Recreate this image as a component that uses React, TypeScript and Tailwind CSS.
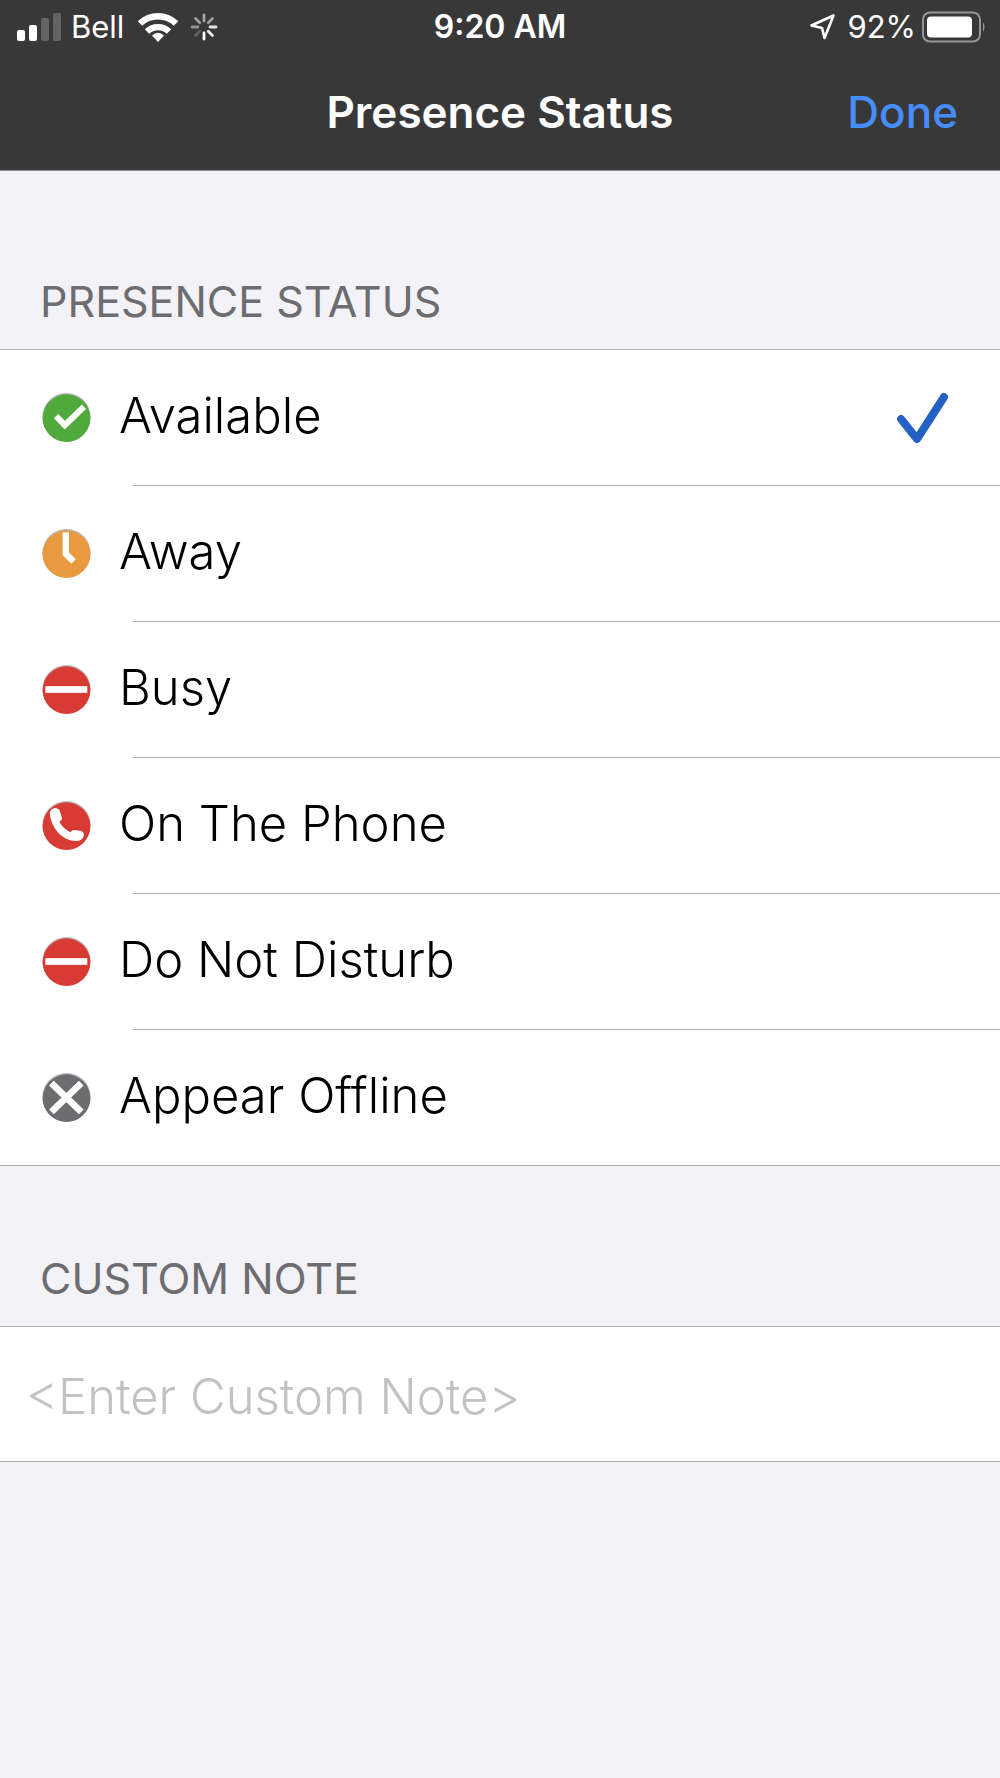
import { useState } from "react";

type Status = {
  id: string;
  label: string;
  color: string;
  glyph: React.ReactNode;
};

const dash = <rect x="10" y="63" width="125" height="20" fill="#fff" />;

const statuses: Status[] = [
  {
    id: "available",
    label: "Available",
    color: "#50a93b",
    glyph: (
      <path d="M42 69 L68 96 L125 41" fill="none" stroke="#fff" strokeWidth="18" />
    ),
  },
  {
    id: "away",
    label: "Away",
    color: "#e9993e",
    glyph: (
      <path d="M71 10 V74 L94 97" fill="none" stroke="#fff" strokeWidth="19" />
    ),
  },
  { id: "busy", label: "Busy", color: "#d83a34", glyph: dash },
  {
    id: "phone",
    label: "On The Phone",
    color: "#d83a34",
    glyph: (
      <path
        d="M23 36 Q25 22 40 21 Q52 23 54 32 L59 50 Q61 58 52 61 Q57 77 84 93 Q91 84 101 87 L115 89 Q126 92 125 103 Q121 118 105 119 Q77 122 50 97 Q26 71 23 36 Z"
        fill="#fff"
      />
    ),
  },
  { id: "dnd", label: "Do Not Disturb", color: "#d83a34", glyph: dash },
  {
    id: "offline",
    label: "Appear Offline",
    color: "#6d6c70",
    glyph: (
      <path d="M28 30 L117 116 M117 30 L28 116" stroke="#fff" strokeWidth="20" />
    ),
  },
];

const spokes = [0.55, 0.5, 0.85, 0.9, 1, 0.2, 0.45, 0.5];

const StatusIcon = ({ status }: { status: Status }) => (
  <svg viewBox="0 0 146 146" className="size-[49px] shrink-0" aria-hidden="true">
    <circle cx="73" cy="72" r="72" fill="#b9b9bb" />
    <circle cx="73" cy="75" r="71" fill={status.color} />
    {status.glyph}
  </svg>
);

const StatusBar = () => (
  <div className="grid h-[54px] grid-cols-[1fr_auto_1fr] items-center text-[31px] leading-9">
    <div className="flex items-center pl-[17px]">
      <svg viewBox="0 0 44 28" className="h-7 w-11" aria-hidden="true">
        <rect x="0" y="17" width="8" height="11" rx="2" fill="#fff" />
        <rect x="12" y="12" width="8" height="16" rx="2" fill="#fff" />
        <rect x="24" y="5" width="8" height="23" rx="2" fill="#636363" />
        <rect x="36" y="0" width="8" height="28" rx="2" fill="#636363" />
      </svg>
      <span className="ml-2.5">Bell</span>
      <svg viewBox="0 0 40 29" className="ml-3.5 h-[29px] w-10" aria-hidden="true">
        <g fill="none" stroke="#fff" strokeWidth="6.4">
          <path d="M2 10.5 A26 26 0 0 1 38 10.5" />
          <path d="M9 18.5 A16 16 0 0 1 31 18.5" />
        </g>
        <path d="M14 22.5 Q20 17 26 22.5 L20 29 Z" fill="#fff" />
      </svg>
      <svg viewBox="-14 -14 28 28" className="ml-3 size-7" aria-hidden="true">
        {spokes.map((opacity, i) => (
          <path
            key={i}
            d="M0 -6 V-12"
            transform={`rotate(${i * 45})`}
            stroke="#fff"
            strokeWidth="2.8"
            strokeLinecap="round"
            opacity={opacity}
          />
        ))}
      </svg>
    </div>
    <span className="text-[32px] font-semibold">9:20 AM</span>
    <div className="flex items-center justify-end pr-3.5">
      <svg viewBox="0 0 28 28" className="size-7" aria-hidden="true">
        <path
          d="M2.5 12.5 L24.5 2.5 L15.5 25 L13 15 Z"
          fill="none"
          stroke="#fff"
          strokeWidth="2.6"
          strokeLinejoin="round"
        />
      </svg>
      <span className="ml-2.5">92%</span>
      <svg viewBox="0 0 64 32" className="ml-1.5 h-8 w-16" aria-hidden="true">
        <rect x="1" y="1.5" width="57" height="29" rx="7" fill="none" stroke="#959595" strokeWidth="2" />
        <rect x="5" y="5.5" width="45" height="21" rx="4" fill="#fff" />
        <path d="M61 11 Q64 16 61 21 Z" fill="#959595" />
      </svg>
    </div>
  </div>
);

const SectionTitle = ({ children }: { children: React.ReactNode }) => (
  <h2 className="px-10 pb-[26px] text-[43px] leading-[44px] text-[#6d6c71] uppercase">
    {children}
  </h2>
);

const App = () => {
  const [selected, setSelected] = useState("available");
  const [note, setNote] = useState("");

  return (
    <div className="min-h-screen bg-[#f2f2f7] font-['Inter',sans-serif] text-black">
      <header className="border-b border-[#8b8b8c] bg-[#383838] text-white">
        <StatusBar />
        <div className="grid h-[116px] grid-cols-[1fr_auto_1fr] items-center text-[44px] leading-[48px]">
          <h1 className="col-start-2 font-semibold">Presence Status</h1>
          <button type="button" className="justify-self-end pr-[42px] font-medium text-[#468dfa]">
            Done
          </button>
        </div>
      </header>

      <main>
        <section className="pt-27">
          <SectionTitle>Presence Status</SectionTitle>
          <div className="border-y border-[#b2b2b5] bg-white" role="radiogroup" aria-label="Presence Status">
            {statuses.map((status) => (
              <div key={status.id} className="group">
                <label className="relative flex h-[135px] cursor-pointer items-center pr-[50px] pl-[42px]">
                  <input
                    type="radio"
                    name="presence"
                    className="sr-only"
                    checked={selected === status.id}
                    onChange={() => setSelected(status.id)}
                  />
                  <StatusIcon status={status} />
                  <span className="ml-7 pb-1 text-[49px] leading-[60px] font-light">{status.label}</span>
                  {selected === status.id && (
                    <svg viewBox="0 0 54 52" className="ml-auto h-[52px] w-[54px]" aria-hidden="true">
                      <path
                        d="M5 27 L21 47 L48 5"
                        fill="none"
                        stroke="#2560c4"
                        strokeWidth="8"
                        strokeLinecap="round"
                        strokeLinejoin="round"
                      />
                    </svg>
                  )}
                </label>
                <div className="ml-[133px] h-px bg-[#b2b2b5] group-last:hidden" />
              </div>
            ))}
          </div>
        </section>

        <section className="pt-[90px]">
          <SectionTitle>
            <label htmlFor="note">Custom Note</label>
          </SectionTitle>
          <input
            id="note"
            type="text"
            value={note}
            onChange={(e) => setNote(e.target.value)}
            placeholder="<Enter Custom Note>"
            className="block h-[136px] w-full border-y border-[#b2b2b5] bg-white px-[26px] pt-1 text-[49px] font-light outline-none placeholder:text-[#c2c2c4]"
          />
        </section>
      </main>
    </div>
  );
};

export default App;
